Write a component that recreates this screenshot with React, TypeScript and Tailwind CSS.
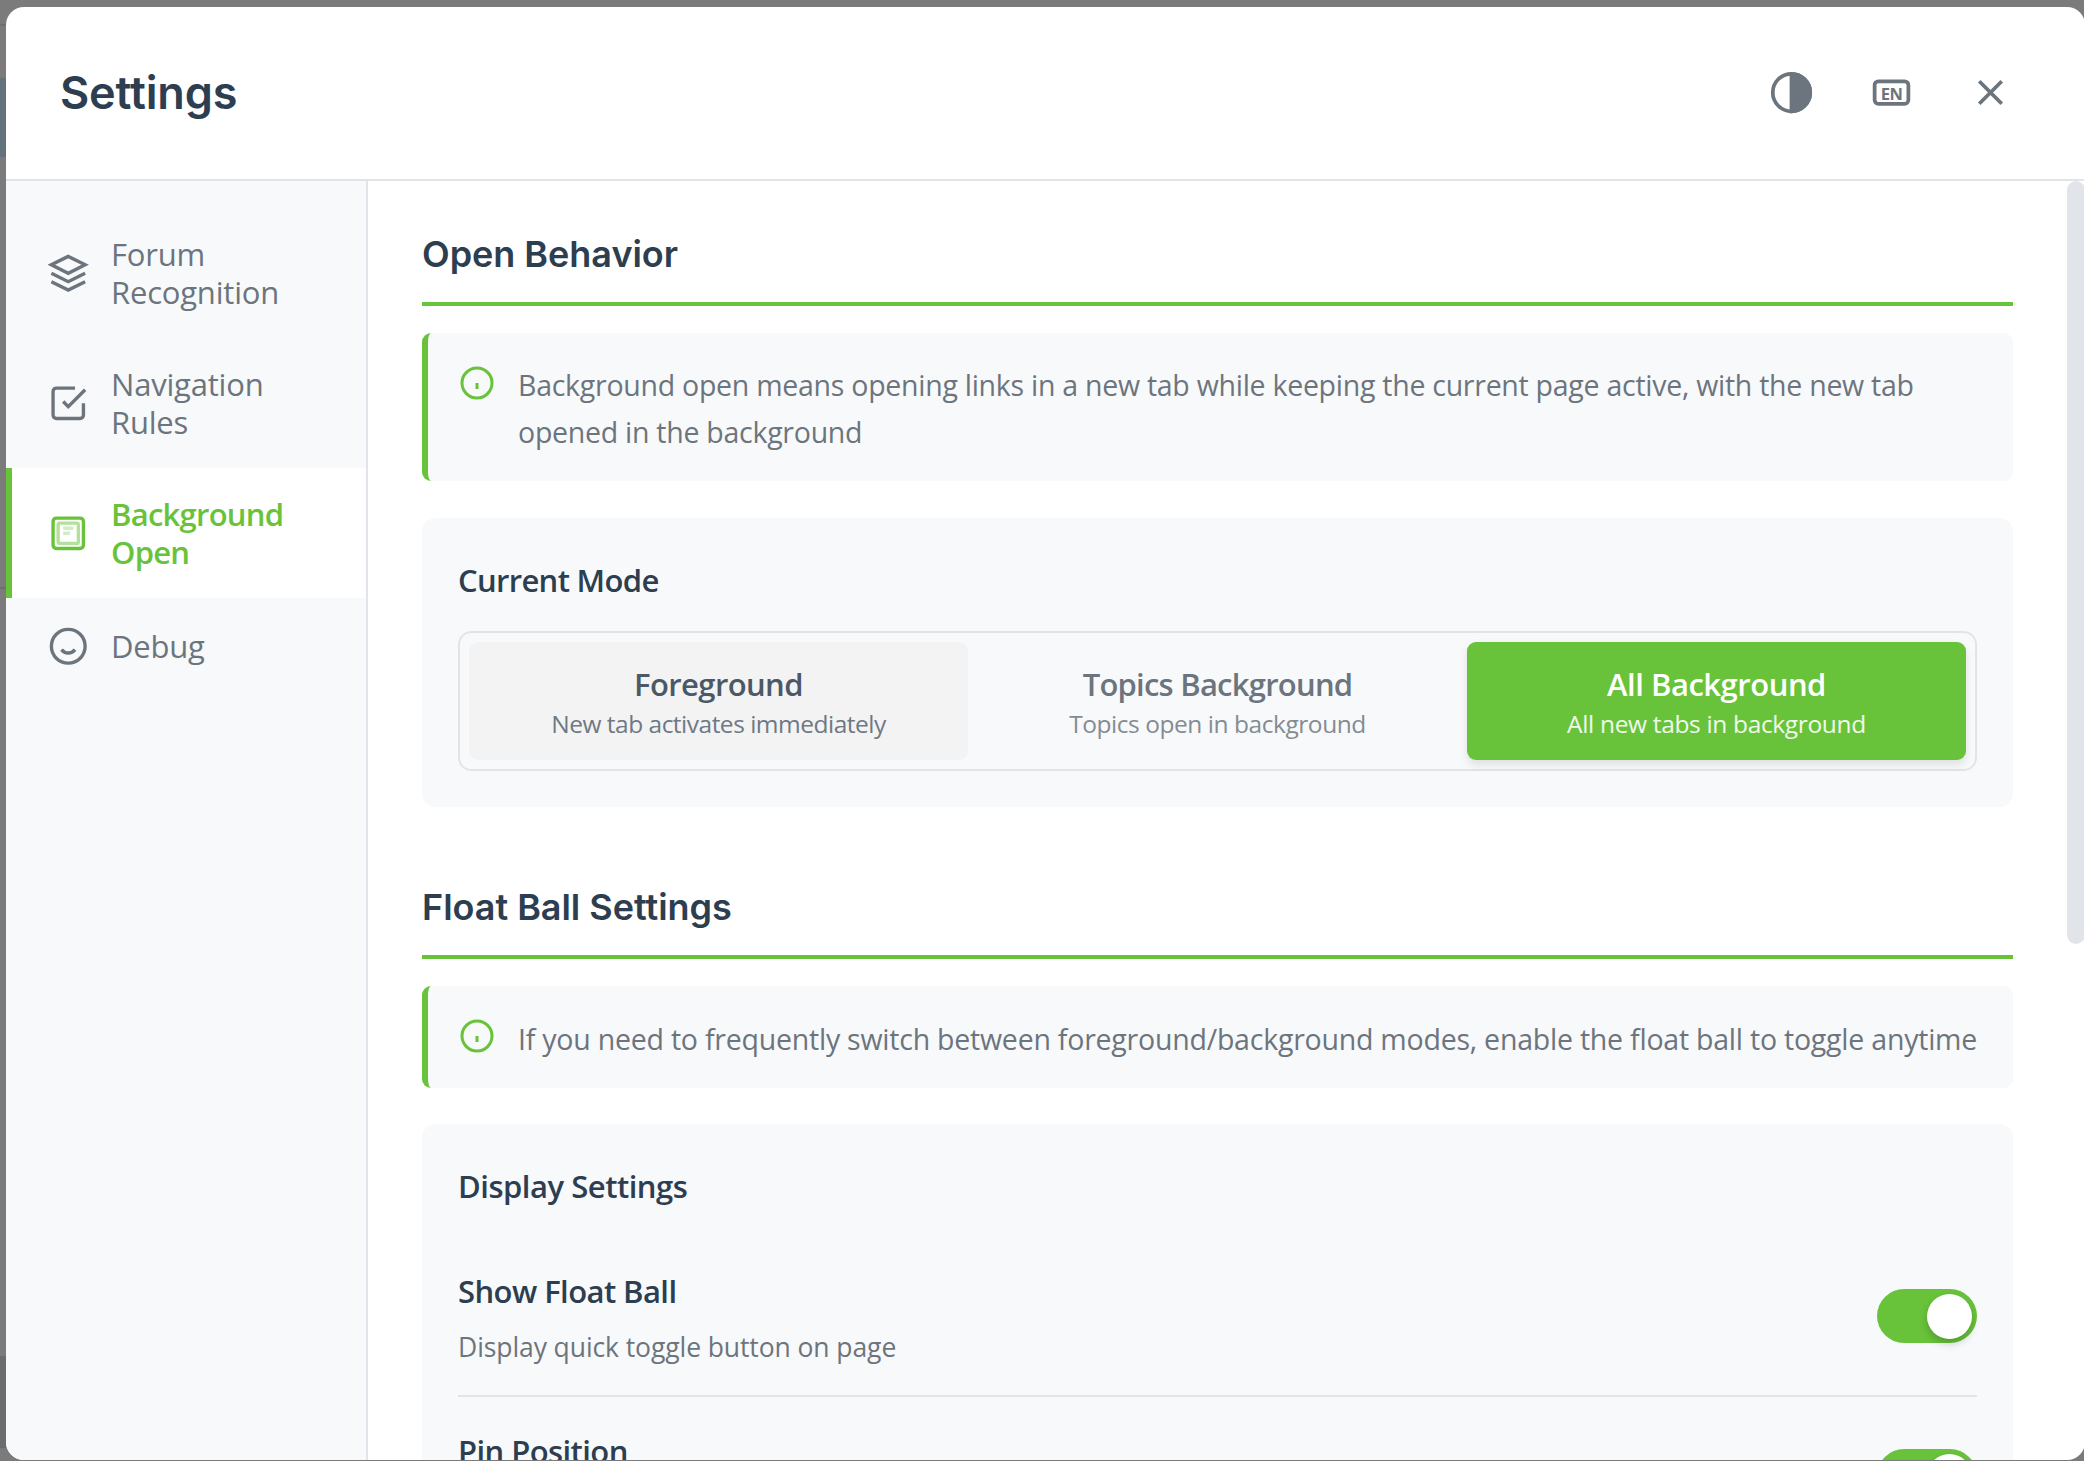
import type { ReactNode } from "react";

function NavIcon({ children }: { children: ReactNode }) {
  return (
    <svg viewBox="0 0 24 24" className="size-[40.5px] shrink-0" fill="none" stroke="currentColor" strokeWidth="2">
      {children}
    </svg>
  );
}

const LayersIcon = () => (
  <NavIcon>
    <path d="M12 2 2 7l10 5 10-5-10-5zM2 17l10 5 10-5M2 12l10 5 10-5" />
  </NavIcon>
);
const CheckIcon = () => (
  <NavIcon>
    <path d="m9 11 3 3L22 4" />
    <path d="M21 12v7a2 2 0 0 1-2 2H5a2 2 0 0 1-2-2V5a2 2 0 0 1 2-2h11" />
  </NavIcon>
);
const WindowIcon = () => (
  <NavIcon>
    <rect x="3" y="3" width="18" height="18" rx="2" />
    <rect x="6" y="6" width="12" height="12" rx="1" opacity="0.5" />
    <path d="M9 9h6M9 12h4" opacity="0.3" />
  </NavIcon>
);
const SmileIcon = () => (
  <NavIcon>
    <circle cx="12" cy="12" r="10" />
    <path d="M8 14s1.5 2 4 2 4-2 4-2" />
  </NavIcon>
);

const NAV = [
  { lines: ["Forum", "Recognition"], icon: <LayersIcon />, active: false },
  { lines: ["Navigation", "Rules"], icon: <CheckIcon />, active: false },
  { lines: ["Background", "Open"], icon: <WindowIcon />, active: true },
  { lines: ["Debug"], icon: <SmileIcon />, active: false },
];

function Sidebar() {
  return (
    <nav className="flex w-[362px] shrink-0 flex-col border-r-2 border-[#e1e4eb] bg-[#f8f9fb] pt-[27px]">
      {NAV.map((item) => (
        <div
          key={item.lines[0]}
          className={
            "flex items-center gap-[22.5px] border-l-6 pl-[36px] text-[31px] leading-[38px] " +
            (item.lines.length > 1 ? "h-[130px] " : "h-[96px] ") +
            (item.active
              ? "border-[#68c33a] bg-white font-semibold tracking-[-0.75px] text-[#68c33a]"
              : "border-transparent tracking-[-0.2px] text-[#6c757d]")
          }
        >
          {item.icon}
          <div>
            {item.lines.map((l) => (
              <div key={l}>{l}</div>
            ))}
          </div>
        </div>
      ))}
    </nav>
  );
}

function Header() {
  return (
    <header className="flex h-[174px] shrink-0 items-center justify-between border-b-2 border-[#e0e4e9] px-[54px]">
      <h1 className="font-['Inter'] text-[45px] leading-[54px] font-semibold tracking-[-0.15px] text-[#2c3e50]">Settings</h1>
      <div className="mb-px flex gap-[18.5px] text-[#6c757d]">
        <button className="flex size-[81px] items-center justify-center">
          <svg viewBox="0 0 24 24" className="size-[45px]" fill="none" stroke="currentColor" strokeWidth="2">
            <circle cx="12" cy="12" r="10" />
            <path d="M12 2a10 10 0 0 1 0 20z" fill="currentColor" />
          </svg>
        </button>
        <button className="flex size-[81px] items-center justify-center">
          <svg viewBox="0 0 24 24" className="size-[45px]" fill="none" stroke="currentColor" strokeWidth="2">
            <rect x="3" y="6" width="18" height="12" rx="2" />
            <text
              x="12"
              y="15.9"
              textAnchor="middle"
              fill="currentColor"
              stroke="none"
              className="font-['Open_Sans'] text-[8.8px] font-bold tracking-[-0.3px]"
            >
              EN
            </text>
          </svg>
        </button>
        <button className="flex size-[81px] items-center justify-center">
          <svg viewBox="0 0 24 24" className="size-[45px]" fill="none" stroke="currentColor" strokeWidth="2">
            <path d="M18 6 6 18M6 6l12 12" />
          </svg>
        </button>
      </div>
    </header>
  );
}

function SectionTitle({ children }: { children: ReactNode }) {
  return (
    <h2 className="border-b-4 border-[#68c33a] pb-[29px] font-['Inter'] text-[36px] leading-[38px] font-semibold tracking-[-0.03px] text-[#2c3e50]">
      {children}
    </h2>
  );
}

function InfoBox({ lines, className }: { lines: string[]; className: string }) {
  return (
    <div
      className={
        "mt-[27px] flex gap-[23.5px] rounded-[9px] border-l-6 border-[#68c33a] bg-[#f8f9fb] pl-[30.5px] " + className
      }
    >
      <svg
        viewBox="0 0 24 24"
        className="mt-[32px] size-9 shrink-0 text-[#68c33a]"
        fill="none"
        stroke="currentColor"
        strokeWidth="2"
      >
        <circle cx="12" cy="12" r="10" />
        <path d="M12 16v-4" />
      </svg>
      <p className={"text-[28.5px] leading-[47px] whitespace-nowrap text-[#6c757d] " + (lines.length > 1 ? "pt-[29px]" : "pt-[30px]")}>
        {lines.map((l) => (
          <span key={l} className="block">
            {l}
          </span>
        ))}
      </p>
    </div>
  );
}

function Card({ title, className, children }: { title: string; className: string; children: ReactNode }) {
  return (
    <div className={"rounded-[13.5px] bg-[#f8f9fb] px-9 pt-9 " + className}>
      <h3 className="mb-[25px] text-[31px] leading-[52px] font-semibold text-[#2c3e50]">{title}</h3>
      {children}
    </div>
  );
}

const MODES = [
  {
    title: "Foreground",
    sub: "New tab activates immediately",
    box: "bg-[#f3f3f3]",
    titleCls: "text-[#4b5967] tracking-[-0.6px]",
    subCls: "text-[#6e7985] tracking-[-0.5px]",
  },
  {
    title: "Topics Background",
    sub: "Topics open in background",
    box: "",
    titleCls: "text-[#6c757d] tracking-[-0.76px]",
    subCls: "text-[#848c93] tracking-[-0.45px]",
  },
  {
    title: "All Background",
    sub: "All new tabs in background",
    box: "bg-[#68c33a] shadow-[0_4.5px_9px_rgba(0,0,0,0.1)]",
    titleCls: "text-white tracking-[-0.48px]",
    subCls: "text-white/90 tracking-[-0.34px]",
  },
];

function ModePicker() {
  return (
    <div className="grid h-[140px] grid-cols-3 rounded-[13.5px] border-2 border-[#e1e4e9] p-[9px]">
      {MODES.map((m) => (
        <div key={m.title} className={"h-[118px] rounded-[9px] pt-[18px] text-center " + m.box}>
          <div className={"text-[31px] leading-[48px] font-semibold " + m.titleCls}>{m.title}</div>
          <div className={"text-[24.5px] leading-[31px] " + m.subCls}>{m.sub}</div>
        </div>
      ))}
    </div>
  );
}

function SettingRow({ label, desc }: { label: string; desc?: string }) {
  return (
    <div className="flex h-[160px] items-center justify-between border-b-2 border-[#e1e4eb]">
      <div className="self-start pt-[35.5px]">
        <div className="text-[31px] leading-[37px] font-semibold tracking-[-0.57px] text-[#2c3e50]">{label}</div>
        {desc && <div className="mt-[19px] text-[26.5px] leading-9 tracking-[-0.09px] text-[#6c757d]">{desc}</div>}
      </div>
      <div className="flex h-[54px] w-[100px] items-center justify-end rounded-full bg-[#68c33a] pr-[5px]">
        <div className="size-[45px] rounded-full bg-white shadow-[0_4.5px_9px_rgba(0,0,0,0.2)]" />
      </div>
    </div>
  );
}

export default function App() {
  return (
    <div className="relative h-[1461px] w-[2084px] overflow-hidden bg-[#7b7b7b] pt-[7px] pl-[6px] font-['Open_Sans',sans-serif]">
      {/* Dimmed page behind the dialog */}
      <div className="absolute top-[24px] left-0 h-[2px] w-[6px] bg-[#6f6f6f]" />
      <div className="absolute top-[78px] left-0 h-[79px] w-[6px] bg-[#62737b]" />
      <div className="absolute top-[587px] left-0 h-[2px] w-[6px] bg-[#6f6f6f]" />
      <div className="absolute top-[1356px] left-0 h-[92px] w-[6px] bg-[#6c6c6c]" />

      <div className="relative flex h-[1453px] w-[2079px] flex-col overflow-hidden rounded-[18px] bg-white">
        <Header />
        <div className="flex min-h-0 flex-1">
          <Sidebar />
          <main className="w-[1699px] shrink-0 overflow-hidden p-[54px]">
            <section>
              <SectionTitle>Open Behavior</SectionTitle>
              <InfoBox
                className="h-[148px] tracking-[-0.265px]"
                lines={[
                  "Background open means opening links in a new tab while keeping the current page active, with the new tab",
                  "opened in the background",
                ]}
              />
              <Card title="Current Mode" className="mt-[37px] h-[289px] tracking-[-0.67px]">
                <ModePicker />
              </Card>
            </section>
            <section className="mt-[81px]">
              <SectionTitle>Float Ball Settings</SectionTitle>
              <InfoBox
                className="h-[102px] tracking-[-0.225px]"
                lines={[
                  "If you need to frequently switch between foreground/background modes, enable the float ball to toggle anytime",
                ]}
              />
              <Card title="Display Settings" className="mt-9 tracking-[-0.48px]">
                <SettingRow label="Show Float Ball" desc="Display quick toggle button on page" />
                <SettingRow label="Pin Position" />
              </Card>
            </section>
          </main>
          <div className="w-[18px] shrink-0">
            <div className="h-[763px] rounded-full bg-[#e1e4e9]" />
          </div>
        </div>
      </div>
    </div>
  );
}
